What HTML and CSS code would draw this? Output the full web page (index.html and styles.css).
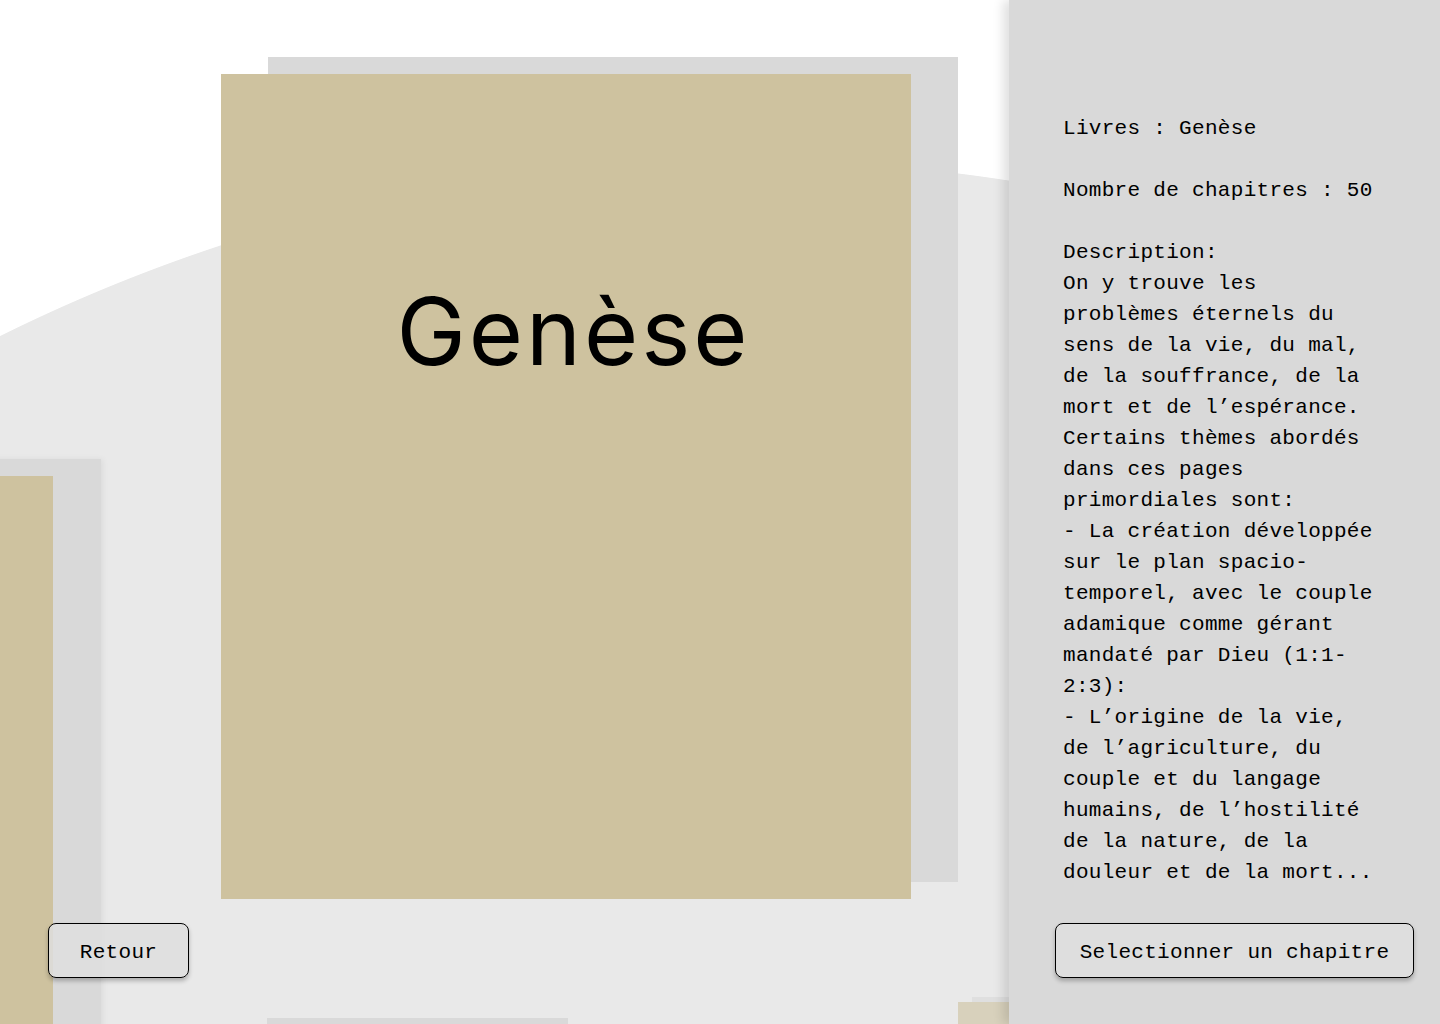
FILE: index.html
```html
<!DOCTYPE html>
<html lang="fr">
<head>
<meta charset="utf-8">
<title>Genèse</title>
<link rel="stylesheet" href="styles.css">
</head>
<body>
<div class="app">
  <main class="stage">
    <article class="card card--main">
      <h1 class="card-title">Genèse</h1>
    </article>
    <div class="card card--prev"></div>
    <div class="card card--below"></div>
    <div class="card card--next"></div>
    <button class="btn btn--back" type="button">Retour</button>
  </main>
  <aside class="panel">
    <p class="info">Livres : Genèse<br><br>Nombre de chapitres : 50<br><br>Description:<br>On y trouve les<br>problèmes éternels du<br>sens de la vie, du mal,<br>de la souffrance, de la<br>mort et de l’espérance.<br>Certains thèmes abordés<br>dans ces pages<br>primordiales sont:<br>- La création développée<br>sur le plan spacio-<br>temporel, avec le couple<br>adamique comme gérant<br>mandaté par Dieu (1:1-<br>2:3):<br>- L’origine de la vie,<br>de l’agriculture, du<br>couple et du langage<br>humains, de l’hostilité<br>de la nature, de la<br>douleur et de la mort...</p>
    <button class="btn btn--select" type="button">Selectionner un chapitre</button>
  </aside>
</div>
</body>
</html>
```

FILE: styles.css
```css
html, body {
  margin: 0;
  padding: 0;
}

body {
  width: 1440px;
  height: 1024px;
  overflow: hidden;
  background: radial-gradient(circle 1685px at 749px 1845px, #e9e9e9 99.95%, #ffffff 100%);
  font-family: "Liberation Mono", "DejaVu Sans Mono", monospace;
  color: #000;
}

.app {
  display: grid;
  grid-template-columns: 1009px 431px;
  height: 1024px;
}

.stage {
  position: relative;
  overflow: hidden;
  padding: 74px 0 0 221px;
}

.card {
  background: #cec29f;
  box-shadow: 47px -17px 0 #d9d9d9;
}

.card--main {
  width: 690px;
  height: 825px;
  display: flex;
  flex-direction: column;
  align-items: center;
  padding-top: 201px;
  box-sizing: border-box;
}

.card-title {
  margin: 0;
  font-family: Inter, "Noto Sans", sans-serif;
  font-weight: 400;
  font-size: 93px;
  line-height: 112px;
  letter-spacing: 3px;
  padding-left: 15px;
}

.card--prev {
  position: absolute;
  left: -637px;
  top: 476px;
  width: 690px;
  height: 825px;
  box-shadow: 48px -17px 0 #d9d9d9, 50px -17px 6px rgba(0, 0, 0, 0.06);
}

.card--below {
  position: absolute;
  left: 247px;
  top: 1035px;
  width: 301px;
  height: 360px;
  box-shadow: 20px -17px 0 #d9d9d9;
}

.card--next {
  position: absolute;
  left: 958px;
  top: 1002px;
  width: 300px;
  height: 360px;
  opacity: 0.6;
  box-shadow: 14px -5px 0 #d9d9d9;
}

.btn {
  font-family: "Liberation Mono", "DejaVu Sans Mono", monospace;
  font-size: 21px;
  letter-spacing: 0.3px;
  color: #000;
  height: 55px;
  border: 1px solid #000;
  border-radius: 8px;
  background: rgba(222, 222, 222, 0.85);
  box-shadow: 0 3px 4px rgba(0, 0, 0, 0.25);
  padding: 3px 0 0;
  cursor: pointer;
}

.btn--back {
  position: absolute;
  left: 48px;
  top: 923px;
  width: 141px;
}

.panel {
  position: relative;
  z-index: 1;
  background: #d9d9d9;
  box-shadow: -6px 0 10px rgba(0, 0, 0, 0.12);
  display: flex;
  flex-direction: column;
  align-items: flex-start;
  padding: 113px 26px 46px 46px;
}

.info {
  margin: 0 0 0 8px;
  font-size: 21px;
  line-height: 31px;
  letter-spacing: 0.3px;
  white-space: nowrap;
}

.btn--select {
  margin-top: auto;
  width: 359px;
}
```
